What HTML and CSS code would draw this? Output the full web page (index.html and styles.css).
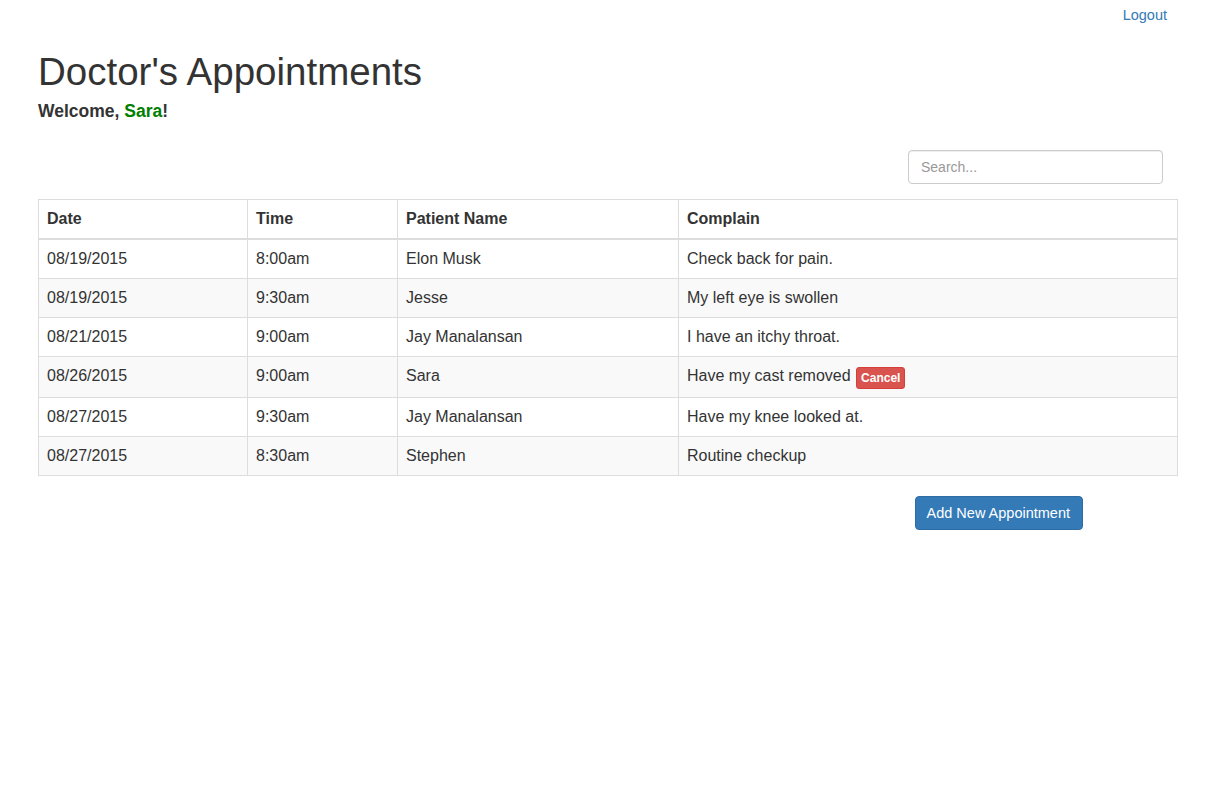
FILE: index.html
```html
<!DOCTYPE html>
<html>
<head>
<meta charset="utf-8">
<link rel="stylesheet" href="styles.css">
</head>
<body>
<div class="topbar"><a class="logout" href="#">Logout</a></div>
<div class="page">
  <h1 class="title">Doctor's Appointments</h1>
  <div class="welcome">Welcome, <span class="name">Sara</span>!</div>
  <div class="toolbar"><input class="search" type="text" placeholder="Search..."></div>
  <table class="appts">
    <colgroup>
      <col class="c-date"><col class="c-time"><col class="c-name"><col class="c-comp">
    </colgroup>
    <thead>
      <tr><th>Date</th><th>Time</th><th>Patient Name</th><th>Complain</th></tr>
    </thead>
    <tbody>
      <tr><td>08/19/2015</td><td>8:00am</td><td>Elon Musk</td><td>Check back for pain.</td></tr>
      <tr><td>08/19/2015</td><td>9:30am</td><td>Jesse</td><td>My left eye is swollen</td></tr>
      <tr><td>08/21/2015</td><td>9:00am</td><td>Jay Manalansan</td><td>I have an itchy throat.</td></tr>
      <tr><td>08/26/2015</td><td>9:00am</td><td>Sara</td><td>Have my cast removed <button class="cancel">Cancel</button></td></tr>
      <tr><td>08/27/2015</td><td>9:30am</td><td>Jay Manalansan</td><td>Have my knee looked at.</td></tr>
      <tr><td>08/27/2015</td><td>8:30am</td><td>Stephen</td><td>Routine checkup</td></tr>
    </tbody>
  </table>
  <div class="actions"><button class="add">Add New Appointment</button></div>
</div>
</body>
</html>
```
FILE: styles.css
```css
html, body {
  margin: 0;
  padding: 0;
  background: #fff;
  color: #333;
  font-family: "Liberation Sans", Arial, sans-serif;
}
.topbar {
  display: flex;
  justify-content: flex-end;
  padding: 6px 60px 0 0;
}
.logout {
  color: #337ab7;
  text-decoration: none;
  font-size: 14.5px;
  line-height: 18px;
}
.page {
  padding-left: 38px;
  width: 1140px;
}
.title {
  margin: 26px 0 0 0;
  font-size: 38.5px;
  font-weight: normal;
  line-height: 44px;
  color: #333;
}
.welcome {
  margin-top: 6px;
  font-size: 17.5px;
  font-weight: bold;
  line-height: 22px;
  color: #333;
}
.name { color: #008000; }
.toolbar {
  display: flex;
  justify-content: flex-end;
  padding-right: 15px;
  margin-top: 28px;
  margin-bottom: 15px;
}
.search {
  width: 255px;
  height: 34px;
  box-sizing: border-box;
  border: 1px solid #ccc;
  border-radius: 4px;
  padding: 6px 12px;
  font-family: "Liberation Sans", Arial, sans-serif;
  font-size: 14px;
  color: #555;
  box-shadow: inset 0 1px 1px rgba(0,0,0,0.075);
  outline: none;
}
.search::placeholder { color: #999; }
.appts {
  width: 1139px;
  border-collapse: collapse;
  table-layout: fixed;
  border: 1px solid #ddd;
  font-size: 16px;
}
.c-date { width: 209px; }
.c-time { width: 150px; }
.c-name { width: 281px; }
.c-comp { width: 499px; }
.appts th, .appts td {
  border: 1px solid #ddd;
  padding: 8px;
  line-height: 22px;
  text-align: left;
  vertical-align: top;
}
.appts th {
  font-weight: bold;
  border-bottom: 2px solid #ddd;
}
.appts tbody tr:nth-child(even) { background: #f9f9f9; }
.cancel {
  background: #d9534f;
  border: 1px solid #d43f3a;
  color: #fff;
  font-family: "Liberation Sans", Arial, sans-serif;
  font-size: 12px;
  font-weight: bold;
  height: 22px;
  line-height: 18px;
  padding: 1px 4px;
  border-radius: 3px;
  vertical-align: middle;
  margin: 2px 0 0 1px;
}
.actions {
  display: flex;
  justify-content: flex-end;
  padding-right: 95px;
  margin-top: 20px;
}
.add {
  height: 34px;
  box-sizing: border-box;
  background: #337ab7;
  border: 1px solid #2e6da4;
  border-radius: 4px;
  color: #fff;
  font-family: "Liberation Sans", Arial, sans-serif;
  font-size: 14.5px;
  padding: 6px 12px 6px 11px;
  line-height: 20px;
}
```
